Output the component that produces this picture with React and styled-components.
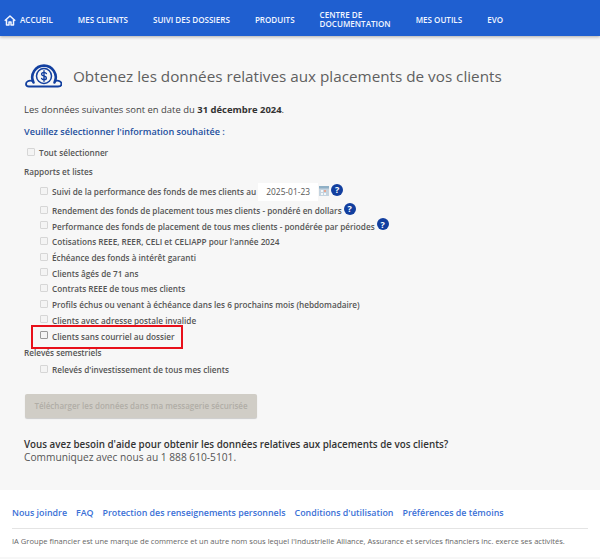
import React from "react";
import styled, { createGlobalStyle } from "styled-components";

const Global = createGlobalStyle`
  html, body {
    margin: 0;
    padding: 0;
    background: #f7f7f7;
  }
  body {
    font-family: "Open Sans", "Noto Sans", sans-serif;
    color: #444;
  }
`;

const Page = styled.div`
  position: relative;
  width: 600px;
  height: 559px;
  overflow: hidden;
  display: flex;
  flex-direction: column;
`;
const Nav = styled.nav`
  height: 36px;
  box-sizing: border-box;
  flex: none;
  background: #1f5fd0;
  box-shadow: 0 1px 3px rgba(0, 0, 0, 0.3);
  display: flex;
  align-items: center;
  padding: 4px 0 0 4px;
`;
const NavItem = styled.a`
  color: #f2f6ff;
  font-size: 8.05px;
  font-weight: 600;
  line-height: 8.7px;
  margin-right: 25px;
  display: flex;
  align-items: center;
  gap: 4px;
`;
const Main = styled.main`
  flex: 1;
  padding: 27px 24px 0;
  display: flex;
  flex-direction: column;
`;
const Heading = styled.div`
  display: flex;
  align-items: center;
  gap: 11px;
  height: 25px;
  margin-bottom: 16px;
`;
const Title = styled.h1`
  margin: 0;
  font-size: 15.26px;
  font-weight: 400;
  color: #5f5f5f;
  white-space: nowrap;
`;
const Info = styled.p`
  margin: 0 0 10px;
  font-size: 9.45px;
  line-height: 12px;
  color: #444;
  b {
    color: #333;
  }
`;
const Prompt = styled.p`
  margin: 0 0 7px;
  font-size: 9.1px;
  line-height: 12px;
  font-weight: 600;
  color: #1d4f9e;
`;
const Row = styled.label`
  display: flex;
  align-items: center;
  gap: 4px;
  height: ${({ $h }) => $h || 15.7}px;
  padding-left: ${({ $indent }) => ($indent ? 16 : 3)}px;
  font-size: 8.2px;
  font-weight: 600;
  color: #555;
  white-space: nowrap;
`;
const Box = styled.span`
  width: 6px;
  height: 6px;
  flex: none;
  border: 1px solid ${({ $dark }) => ($dark ? "#9a9a9a" : "#d6d6d6")};
  border-radius: 1px;
  background: #f4f4f4;
  margin-top: -2px;
`;
const Section = styled.div`
  margin: ${({ $top }) => $top}px 0 2px;
  font-size: 8.2px;
  font-weight: 600;
  line-height: 14px;
  color: #555;
`;
const DateInput = styled.span`
  background: #fff;
  width: 60px;
  height: 18px;
  margin-left: -2px;
  display: flex;
  align-items: center;
  justify-content: center;
  font-size: 8.4px;
  font-weight: 400;
  color: #555;
`;
const Calendar = styled.svg`
  flex: none;
  margin: -2px 0 0 -3px;
`;
const Help = styled.span`
  width: 12px;
  height: 12px;
  flex: none;
  margin-left: -2px;
  margin-top: -4px;
  border-radius: 50%;
  background: #123f9f;
  color: #fff;
  font-size: 9px;
  font-weight: 700;
  display: flex;
  align-items: center;
  justify-content: center;
`;
const Highlight = styled.div`
  position: absolute;
  left: 31px;
  top: 325px;
  width: 152px;
  height: 24px;
  box-sizing: border-box;
  border: 2px solid #e8101a;
`;
const Download = styled.button`
  align-self: flex-start;
  margin: 16px 0 0 1px;
  width: 232px;
  height: 24px;
  padding: 0;
  border: none;
  border-radius: 2px;
  background: #d0cdc6;
  box-shadow: 0 1px 1px rgba(0, 0, 0, 0.18);
  color: #b0ada6;
  font-family: inherit;
  font-size: 8px;
  font-weight: 600;
`;
const HelpBlock = styled.div`
  margin-top: 20px;
  font-size: 10.2px;
  line-height: 13.5px;
  color: #555;
  white-space: nowrap;
  b {
    font-size: 9.8px;
    color: #333;
    font-weight: 600;
  }
`;
const Footer = styled.footer`
  height: 67px;
  margin-bottom: 2px;
  flex: none;
  background: #fff;
  padding: 0 12px;
  box-sizing: border-box;
`;
const Links = styled.div`
  height: 21px;
  padding-top: 17px;
  display: flex;
  gap: 9px;
  font-size: 8.87px;
  font-weight: 600;
  line-height: 12px;
  color: #3a70d6;
  border-bottom: 1px solid #e4e4e4;
`;
const Legal = styled.p`
  margin: 7px 0 0;
  font-size: 7.57px;
  line-height: 10px;
  color: #666;
  white-space: nowrap;
`;

const HomeIcon = () => (
  <svg width="12" height="11" viewBox="0 0 24 22" fill="none" stroke="#f2f6ff" strokeWidth="3" strokeLinejoin="round">
    <path d="M1.5 11.5 12 2l10.5 9.5" />
    <path d="M5 9v11h5v-6h4v6h5V9" />
  </svg>
);

const MoneyIcon = () => (
  <svg width="38" height="25" viewBox="-1 0 38 25" fill="none" stroke="#123f9f" strokeLinecap="round">
    <path d="M8.5 19.5A11.7 11.7 0 1 1 29.5 19.5" strokeWidth="2.6" />
    <path d="M7 18C4 17 1 18.5 1 21 1 23 2.5 23.5 4 23.5H33C35 23.5 36.5 23 36.5 21 36.5 18.5 33.5 17 30.5 18" strokeWidth="1.8" />
    <circle cx="19" cy="13" r="7.5" strokeWidth="1.5" />
    <path d="M21.4 10.6C20.9 9.8 20 9.4 19 9.4 17.6 9.4 16.6 10.1 16.6 11.2 16.6 13.6 21.4 12.5 21.4 14.9 21.4 16 20.4 16.7 19 16.7 18 16.7 17 16.3 16.6 15.5M19 7.8V18.2" strokeWidth="1.4" />
  </svg>
);

const CalendarIcon = () => (
  <Calendar width="10" height="10" viewBox="0 0 10 10">
    <rect width="10" height="10" fill="#c4d3df" />
    <rect width="10" height="2.5" fill="#8fb0c6" />
    <rect x="2" y="4" width="2" height="2" fill="#f3f6f8" />
    <rect x="5" y="4" width="2" height="2" fill="#e9a58f" />
    <rect x="2" y="7" width="2" height="2" fill="#f3f6f8" />
    <rect x="5" y="7" width="2" height="2" fill="#f3f6f8" />
  </Calendar>
);

const simpleRows = [
  "Cotisations REEE, REER, CELI et CELIAPP pour l'année 2024",
  "Échéance des fonds à intérêt garanti",
  "Clients âgés de 71 ans",
  "Contrats REEE de tous mes clients",
  "Profils échus ou venant à échéance dans les 6 prochains mois (hebdomadaire)",
  "Clients avec adresse postale invalide",
];

const footerLinks = [
  "Nous joindre",
  "FAQ",
  "Protection des renseignements personnels",
  "Conditions d'utilisation",
  "Préférences de témoins",
];

export default function App() {
  return (
    <Page>
      <Global />
      <Nav>
        <NavItem><HomeIcon />ACCUEIL</NavItem>
        <NavItem>MES CLIENTS</NavItem>
        <NavItem>SUIVI DES DOSSIERS</NavItem>
        <NavItem>PRODUITS</NavItem>
        <NavItem>CENTRE DE<br />DOCUMENTATION</NavItem>
        <NavItem>MES OUTILS</NavItem>
        <NavItem>EVO</NavItem>
      </Nav>
      <Main>
        <Heading>
          <MoneyIcon />
          <Title>Obtenez les données relatives aux placements de vos clients</Title>
        </Heading>
        <Info>Les données suivantes sont en date du <b>31 décembre 2024</b>.</Info>
        <Prompt>Veuillez sélectionner l'information souhaitée :</Prompt>
        <Row><Box />Tout sélectionner</Row>
        <Section $top={4}>Rapports et listes</Section>
        <Row $indent $h={22}>
          <Box />Suivi de la performance des fonds de mes clients au
          <DateInput>2025-01-23</DateInput>
          <CalendarIcon />
          <Help>?</Help>
        </Row>
        <Row $indent><Box />Rendement des fonds de placement tous mes clients - pondéré en dollars<Help>?</Help></Row>
        <Row $indent><Box />Performance des fonds de placement de tous mes clients - pondérée par périodes<Help>?</Help></Row>
        {simpleRows.map((label) => (
          <Row $indent key={label}><Box />{label}</Row>
        ))}
        <Row $indent><Box $dark />Clients sans courriel au dossier</Row>
        <Section $top={2}>Relevés semestriels</Section>
        <Row $indent><Box />Relevés d'investissement de tous mes clients</Row>
        <Download>Télécharger les données dans ma messagerie sécurisée</Download>
        <HelpBlock>
          <b>Vous avez besoin d'aide pour obtenir les données relatives aux placements de vos clients?</b>
          <br />
          Communiquez avec nous au 1 888 610-5101.
        </HelpBlock>
      </Main>
      <Footer>
        <Links>
          {footerLinks.map((link) => (
            <span key={link}>{link}</span>
          ))}
        </Links>
        <Legal>IA Groupe financier est une marque de commerce et un autre nom sous lequel l'Industrielle Alliance, Assurance et services financiers inc. exerce ses activités.</Legal>
      </Footer>
      <Highlight />
    </Page>
  );
}
